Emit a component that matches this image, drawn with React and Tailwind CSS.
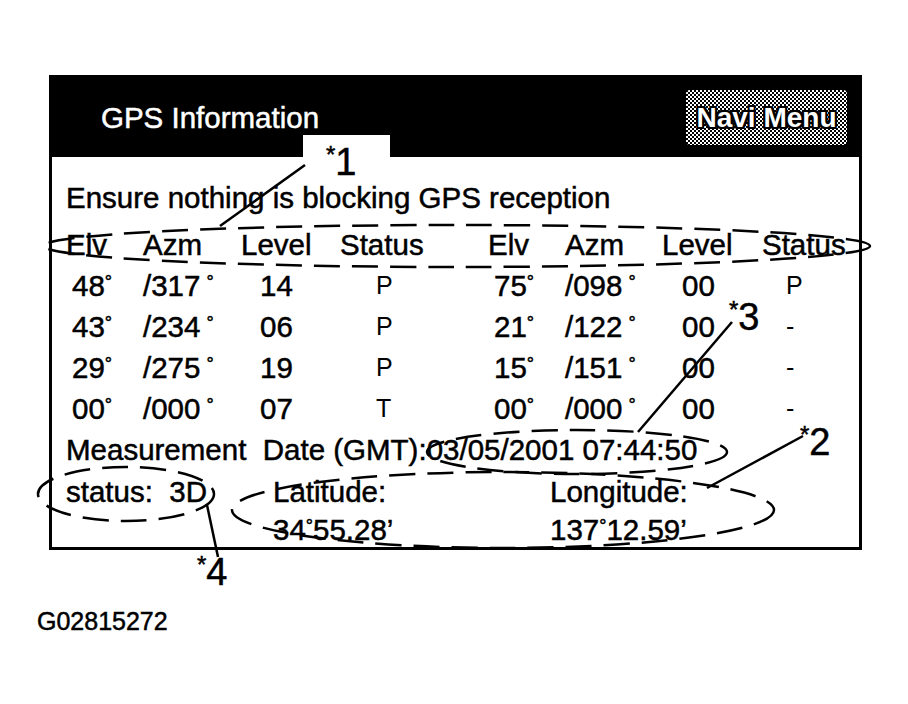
import React from 'react';

const rows = [
    ['48', '317', '14', 'P', '75', '098', '00', 'P'],
    ['43', '234', '06', 'P', '21', '122', '00', '-'],
    ['29', '275', '19', 'P', '15', '151', '00', '-'],
    ['00', '000', '07', 'T', '00', '000', '00', '-'],
];

const cols = 'grid grid-cols-[77px_98px_99px_148px_77px_97px_100px_1fr] items-center';

const Deg = ({ gap = false }) => (
    <span className={`text-[18px] align-[8px] ${gap ? 'ml-[6px]' : ''}`}>°</span>
);

const Flag = ({ value, pad }) => (
    <span className={`${pad} text-[25px] [-webkit-text-stroke:0px]`}>{value}</span>
);

const Mark = ({ n, x, y }) => (
    <div className="absolute flex items-start leading-none" style={{ left: x, top: y }}>
        <span className="text-[24px] leading-none">*</span>
        <span className="text-[38px] leading-none">{n}</span>
    </div>
);

// callout marks drawn over the screen: dashed rings, leader lines, numbers
const Callouts = () => (
    <>
        <svg className="absolute left-0 top-0 w-[908px] h-[704px] pointer-events-none" viewBox="0 0 908 704">
            <rect x="303" y="135" width="87" height="23" fill="#fff" />
            <g fill="none" stroke="#000" strokeWidth="2.5" strokeDasharray="26 12">
                <ellipse cx="457" cy="246" rx="413" ry="21" />
                <ellipse cx="577" cy="452" rx="150" ry="22" />
                <ellipse cx="503" cy="510" rx="271" ry="38" />
                <ellipse cx="126" cy="494" rx="88" ry="27" />
            </g>
            <g stroke="#000" strokeWidth="2.5">
                <line x1="220" y1="226" x2="305" y2="165" />
                <line x1="638" y1="432" x2="732" y2="322" />
                <line x1="707" y1="488" x2="803" y2="436" />
                <line x1="207" y1="505" x2="218" y2="557" />
            </g>
        </svg>
        <Mark n="1" x={326} y={143} />
        <Mark n="3" x={729} y={298} />
        <Mark n="2" x={800} y={423} />
        <Mark n="4" x={197} y={553} />
    </>
);

export default function App() {
    return (
        <div className="relative w-[908px] h-[704px] bg-white overflow-hidden pt-[75px] text-black font-['Liberation_Sans',Arial,sans-serif] [-webkit-text-stroke:0.5px]">
            <div className="ml-[49px] w-[813px] h-[475px] border-[3px] border-black flex flex-col">
                <div className="h-[79px] bg-black flex items-center justify-between pl-[49px] pr-[12px]">
                    <span className="text-white text-[29.5px] leading-none">GPS Information</span>
                    <div className="w-[161px] h-[55px] rounded-[4px] flex items-center justify-center [background-image:repeating-conic-gradient(#fff_0_25%,#000_0_50%)] [background-size:4px_4px]">
                        <span className="text-white text-[28px] font-bold leading-none [-webkit-text-stroke:0px] [text-shadow:2px_0_0_#000,-2px_0_0_#000,0_2px_0_#000,0_-2px_0_#000,2px_2px_0_#000,-2px_-2px_0_#000,2px_-2px_0_#000,-2px_2px_0_#000]">
                            Navi Menu
                        </span>
                    </div>
                </div>

                <div className="flex-1 pl-[14px] pt-[20px] text-[29.5px] leading-none">
                    <div className="h-[41px] flex items-center">Ensure nothing is blocking GPS reception</div>

                    <div className={`${cols} h-[41px] mt-[6px]`}>
                        <span>Elv</span>
                        <span>Azm</span>
                        <span>Level</span>
                        <span>Status</span>
                        <span>Elv</span>
                        <span>Azm</span>
                        <span>Level</span>
                        <span>Status</span>
                    </div>

                    {rows.map((r, i) => (
                        <div key={i} className={`${cols} h-[41px]`}>
                            <span className="pl-[6px]">{r[0]}<Deg /></span>
                            <span>/{r[1]}<Deg gap /></span>
                            <span className="pl-[19px]">{r[2]}</span>
                            <Flag value={r[3]} pad="pl-[36px]" />
                            <span className="pl-[6px]">{r[4]}<Deg /></span>
                            <span>/{r[5]}<Deg gap /></span>
                            <span className="pl-[20px]">{r[6]}</span>
                            <Flag value={r[7]} pad="pl-[24px]" />
                        </div>
                    ))}

                    <div className="h-[41px] flex items-center whitespace-pre">
                        Measurement  Date (GMT):03/05/2001 07:44:50
                    </div>

                    <div className="grid grid-cols-[207px_277px_1fr] h-[44px] items-center whitespace-pre">
                        <span>status:  3D</span>
                        <span>Latitude:</span>
                        <span>Longitude:</span>
                    </div>
                    <div className="grid grid-cols-[207px_277px_1fr] h-[32px] items-center">
                        <span />
                        <span>34<Deg />55.28’</span>
                        <span>137<Deg />12.59’</span>
                    </div>
                </div>
            </div>

            <div className="ml-[37px] mt-[59px] text-[25px] leading-none">G02815272</div>

            <Callouts />
        </div>
    );
}
